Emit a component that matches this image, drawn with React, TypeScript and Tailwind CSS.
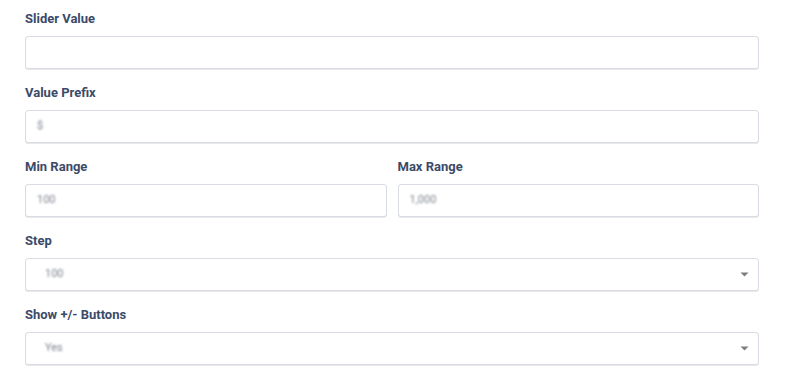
const fieldInput =
  "h-[33px] w-full rounded-[3px] border border-[#d9dce2] bg-white shadow-[0_1px_0_#e6e8ec] flex items-center";

function Label({ children }: { children: React.ReactNode }) {
  return (
    <div className="pt-[1px] text-[13px] font-bold leading-[19px] text-[#3b4a68]">
      {children}
    </div>
  );
}

function TextField({ label, value }: { label: string; value?: string }) {
  return (
    <div className="flex flex-col gap-2 pt-2">
      <Label>{label}</Label>
      <div className={`${fieldInput} px-[11px]`}>
        {value && (
          <span className="text-[11px] text-[#7d838e] blur-[1.3px]">{value}</span>
        )}
      </div>
    </div>
  );
}

function SelectField({ label, value }: { label: string; value: string }) {
  return (
    <div className="flex flex-col gap-2 pt-2">
      <Label>{label}</Label>
      <div className={`${fieldInput} justify-between pl-[19px] pr-[7px]`}>
        <span className="text-[11px] text-[#7d838e] blur-[1.3px]">{value}</span>
        <svg width="9" height="5" viewBox="0 0 9 5" className="mr-[2px]">
          <path d="M0.5 0.5h8L4.5 4.5z" fill="#7a7d82" />
        </svg>
      </div>
    </div>
  );
}

export default function App() {
  return (
    <div
      className="min-h-[378px] w-[785px] bg-white pl-[25px] pr-[26px]"
      style={{ fontFamily: "Roboto, 'Liberation Sans', sans-serif" }}
    >
      <div className="flex flex-col gap-[5px]">
        <TextField label="Slider Value" />
        <TextField label="Value Prefix" value="$" />
        <div className="grid grid-cols-2 gap-[11px]">
          <TextField label="Min Range" value="100" />
          <TextField label="Max Range" value="1,000" />
        </div>
        <SelectField label="Step" value="100" />
        <SelectField label="Show +/- Buttons" value="Yes" />
      </div>
    </div>
  );
}
